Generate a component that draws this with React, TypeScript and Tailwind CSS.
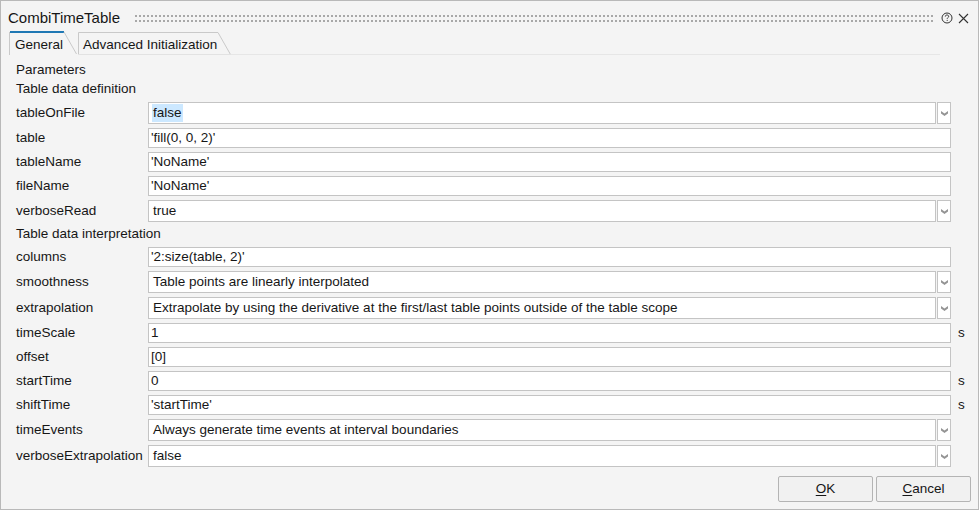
import React from "react";

type Param = {
  label: string;
  value: string;
  kind: "input" | "combo";
  unit?: string;
  selected?: boolean;
};

const definition: Param[] = [
  { label: "tableOnFile", value: "false", kind: "combo", selected: true },
  { label: "table", value: "'fill(0, 0, 2)'", kind: "input" },
  { label: "tableName", value: "'NoName'", kind: "input" },
  { label: "fileName", value: "'NoName'", kind: "input" },
  { label: "verboseRead", value: "true", kind: "combo" },
];

const interpretation: Param[] = [
  { label: "columns", value: "'2:size(table, 2)'", kind: "input" },
  { label: "smoothness", value: "Table points are linearly interpolated", kind: "combo" },
  {
    label: "extrapolation",
    value: "Extrapolate by using the derivative at the first/last table points outside of the table scope",
    kind: "combo",
  },
  { label: "timeScale", value: "1", kind: "input", unit: "s" },
  { label: "offset", value: "[0]", kind: "input" },
  { label: "startTime", value: "0", kind: "input", unit: "s" },
  { label: "shiftTime", value: "'startTime'", kind: "input", unit: "s" },
  { label: "timeEvents", value: "Always generate time events at interval boundaries", kind: "combo" },
  { label: "verboseExtrapolation", value: "false", kind: "combo" },
];

function Chevron() {
  return (
    <svg width="9" height="7" viewBox="0 0 9 7">
      <path d="M1 1 L4.5 3.6 L8 1 L8 3.4 L4.5 6 L1 3.4 Z" fill="#959595" />
    </svg>
  );
}

function ParamRow({ p }: { p: Param }) {
  return (
    <div className={`flex items-center mb-[4px] ${p.kind === "combo" ? "h-[22px]" : "h-[20px]"}`}>
      <div className="w-[132px] shrink-0 whitespace-nowrap">{p.label}</div>
      {p.kind === "combo" ? (
        <div className="flex w-[803px] h-[22px] gap-px">
          <div className="flex-1 flex items-center border border-[#c4c4c4] bg-white pl-[3px] whitespace-nowrap overflow-hidden">
            {p.selected ? (
              <span className="bg-[#cce8ff] h-[18px] flex items-center px-px">{p.value}</span>
            ) : (
              <span className="px-px">{p.value}</span>
            )}
          </div>
          <div className="w-[14px] flex items-center justify-center border border-[#c4c4c4] bg-white">
            <Chevron />
          </div>
        </div>
      ) : (
        <div className="w-[803px] h-[20px] flex items-center border border-[#c4c4c4] bg-white pl-[2px] whitespace-nowrap overflow-hidden">
          {p.value}
        </div>
      )}
      {p.unit && <span className="ml-[7px]">{p.unit}</span>}
    </div>
  );
}

function Grip() {
  return (
    <svg className="flex-1 h-[7px] ml-[15px] mr-[8px]">
      <defs>
        <pattern id="grip" width="4" height="7" patternUnits="userSpaceOnUse">
          <rect x="0" y="0" width="2" height="2" fill="#a8a8a8" />
          <rect x="0" y="5" width="2" height="2" fill="#a8a8a8" />
        </pattern>
      </defs>
      <rect width="100%" height="100%" fill="url(#grip)" />
    </svg>
  );
}

export default function App() {
  return (
    <div className="w-[979px] h-[510px] border border-[#b9b9b9] bg-[#f4f4f4] flex flex-col font-['Liberation_Sans',Arial,sans-serif] text-[13.5px] text-[#161616] overflow-hidden">
      {/* title bar */}
      <div className="h-[30px] pt-[4px] pl-[7px] pr-[9px] flex items-center shrink-0">
        <span className="text-[15px] text-[#161616]">CombiTimeTable</span>
        <Grip />
        <svg width="12" height="12" viewBox="0 0 12 12" className="mr-[5px]">
          <circle cx="6" cy="6" r="5" fill="none" stroke="#333" strokeWidth="1" />
          <path d="M4.3 4.6 C4.3 3.5 5 3 6 3 C7 3 7.7 3.6 7.7 4.4 C7.7 5.4 6.2 5.6 6.2 6.8" fill="none" stroke="#333" strokeWidth="1" />
          <rect x="5.7" y="7.9" width="1" height="1" fill="#333" />
        </svg>
        <svg width="11" height="11" viewBox="0 0 11 11">
          <path d="M1 1 L10 10 M10 1 L1 10" stroke="#333" strokeWidth="1.1" />
        </svg>
      </div>

      {/* tabs */}
      <div className="flex items-end h-[24px] pl-[8px] shrink-0">
        <div className="relative w-[68px] h-[24px] pl-[6px] pt-[4px]">
          <svg className="absolute inset-0" width="68" height="24">
            <path d="M0.5 24 V1" stroke="#c9c9c9" />
            <rect x="1" y="0" width="54" height="2" fill="#1f78b4" />
            <path d="M55 1 L67.5 23" stroke="#c9c9c9" />
          </svg>
          <span className="relative">General</span>
        </div>
        <div className="relative ml-[1px] w-[153px] h-[23px] pl-[5px] pt-[3px]">
          <svg className="absolute inset-0" width="153" height="23">
            <path d="M0.5 23 V0.5 H140 L152.5 22.5" fill="none" stroke="#c9c9c9" />
            <path d="M0 22.5 H153" stroke="#e2e2e2" />
          </svg>
          <span className="relative">Advanced Initialization</span>
        </div>
        <div className="flex-1 h-px bg-[#e6e6e6] mr-[38px] mb-[0.5px]" />
      </div>

      {/* parameters */}
      <div className="flex flex-col pl-[15px] pt-[6px]">
        <div className="h-[19px] flex items-center">Parameters</div>
        <div className="h-[19px] mb-[3px] flex items-center">Table data definition</div>
        {definition.map((p) => (
          <ParamRow key={p.label} p={p} />
        ))}
        <div className="h-[17px] mb-[4px] flex items-center">Table data interpretation</div>
        {interpretation.map((p) => (
          <ParamRow key={p.label} p={p} />
        ))}
      </div>

      {/* buttons */}
      <div className="mt-auto flex justify-end gap-[3px] pr-[7px] pb-[7px]">
        <button type="button" className="w-[95px] h-[26px] border border-[#b4b4b4] rounded-[2px] bg-[#f1f1f1]">
          <span className="underline underline-offset-2">O</span>K
        </button>
        <button type="button" className="w-[95px] h-[26px] border border-[#b4b4b4] rounded-[2px] bg-[#f1f1f1]">
          <span className="underline underline-offset-2">C</span>ancel
        </button>
      </div>
    </div>
  );
}
